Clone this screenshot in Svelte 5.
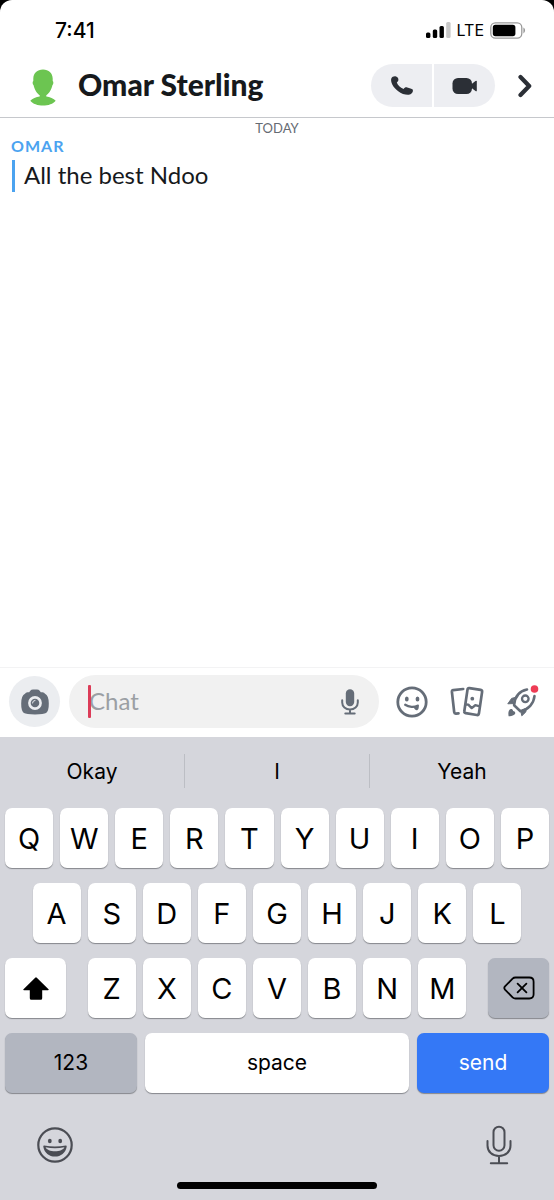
<script>
    const topRow = 'QWERTYUIOP'.split('');
    const middleRow = 'ASDFGHJKL'.split('');
    const bottomRow = 'ZXCVBNM'.split('');
    const suggestions = ['Okay', 'I', 'Yeah'];
    const messages = [{ sender: 'Omar', text: 'All the best Ndoo' }];

    let draft = $state('');
</script>

<div class="screen">
    <div class="phone">
        <div class="status">
            <span class="time">7:41</span>
            <div class="status-icons">
                <svg width="25" height="16" viewBox="0 0 25 16" aria-hidden="true">
                    <rect x="0" y="10.500" width="4.400" height="5.500" rx="1.500" />
                    <rect x="6.800" y="7.500" width="4.400" height="8.500" rx="1.500" />
                    <rect x="13.500" y="4" width="4.400" height="12" rx="1.500" />
                    <rect x="20.200" y="0" width="4.400" height="16" rx="1.500" fill="#c8c8c8" />
                </svg>
                <span class="network">LTE</span>
                <svg width="36" height="17" viewBox="0 0 36 17" aria-hidden="true">
                    <rect x="0.8" y="0.8" width="31" height="15.4" rx="4.6" fill="none" stroke="#999" stroke-width="1.3" />
                    <rect x="2.8" y="2.8" width="22.6" height="11.4" rx="2.6" />
                    <path d="M33.4 5.6c2.2 1 2.2 4.8 0 5.8z" fill="#999" />
                </svg>
            </div>
        </div>

        <header>
            <svg class="avatar" width="26" height="37" viewBox="0 0 26 37" aria-hidden="true">
                <path fill="#6cc551" d="M13 .5C18.800.5 22.500 4 22.700 9.500v2.500c1 .4.900 3.500-.3 4.300C21.600 20.500 19 24.500 16.300 26.200v1.300c3.500.4 7.500 1.900 9.400 4.200C23.500 34.800 18 36.600 13 36.600S2.500 34.800.3 31.700C2.200 29.400 6.200 27.900 9.700 27.500v-1.300C7 24.500 4.400 20.500 3.600 16.300 2.400 15.500 2.300 12.400 3.300 12V9.500C3.500 4 7.200.5 13 .5z" />
            </svg>
            <h1>Omar Sterling</h1>
            <div class="calls">
                <button aria-label="Voice call">
                    <svg width="24" height="22" viewBox="0 0 24 22" aria-hidden="true">
                        <path fill="#2b2f36" d="M1.300 3.400C2 1.800 4.200 1 6 1.500c1.600.5 2.400 1.600 2.400 3.100 0 1.300-.5 2.200-1.600 2.900 1 2.700 3.300 5 6.800 6.400.8-1.300 2-1.800 3.600-1.500 2.300.4 4.600 1.300 5.500 2.100.8 1.800-.6 4.300-3 5-2.800.8-7.700-.3-11.800-3.600C3.200 12.500.2 6.700 1.300 3.400z" />
                    </svg>
                </button>
                <button aria-label="Video call">
                    <svg width="26" height="18" viewBox="0 0 26 18" aria-hidden="true">
                        <rect x="0.500" y="1" width="19.500" height="16" rx="5.500" fill="#2b2f36" />
                        <path fill="#2b2f36" d="M19 7.500 23.500 4q1.300-.7 1.300.6v8.800q0 1.300-1.300.6L19 10.500z" />
                    </svg>
                </button>
            </div>
            <button class="next" aria-label="Open profile">
                <svg width="14" height="24" viewBox="0 0 14 24" aria-hidden="true">
                    <path d="m2.500 3 8.700 9-8.700 9" fill="none" stroke="#2b2f36" stroke-width="4.2" stroke-linecap="round" stroke-linejoin="round" />
                </svg>
            </button>
        </header>

        <main>
            <p class="day">TODAY</p>
            {#each messages as message}
                <article>
                    <h2>{message.sender}</h2>
                    <p class="message">{message.text}</p>
                </article>
            {/each}
        </main>

        <div class="composer">
            <button class="camera" aria-label="Camera">
                <svg width="28" height="26" viewBox="0 0 28 26" aria-hidden="true">
                    <path fill="#656d78" d="M9.300 1.800Q10.300.5 12 .5h4q1.700 0 2.700 1.300l1.100 1.500h1.700q1.800 0 2.500 1.500Q27.700 6.500 27.800 14.500 27.900 22 25 24q-2 1.400-11 1.400T3 24Q.1 22 .2 14.500.3 6.500 4 4.800q.7-1.500 2.500-1.500h1.700z" />
                    <circle cx="14" cy="14" r="5.600" fill="#656d78" stroke="#ebedf0" stroke-width="2.600" />
                    <path d="M11.500 14a2.600 2.600 0 0 1 2.500-2.600" fill="none" stroke="#ebedf0" stroke-width="1" stroke-linecap="round" />
                </svg>
            </button>
            <div class="field">
                <span class="caret"></span>
                <input type="text" placeholder="Chat" aria-label="Chat" bind:value={draft} />
                <button aria-label="Voice note">
                    <svg width="18" height="26" viewBox="0 0 18 26" aria-hidden="true">
                        <rect x="4.800" y="0.300" width="8.400" height="17" rx="4.200" fill="#656d78" />
                        <path d="M1.200 11.200v2.300C1.200 17.500 4.500 20.400 9 20.400s7.800-2.900 7.800-6.900v-2.300M9 20.400v4M4.300 24.500h9.400" fill="none" stroke="#656d78" stroke-width="2" stroke-linecap="round" />
                    </svg>
                </button>
            </div>
            <div class="tools">
                <button aria-label="Stickers">
                    <svg width="32" height="32" viewBox="0 0 32 32" aria-hidden="true">
                        <circle cx="16" cy="16" r="14.200" fill="none" stroke="#656d78" stroke-width="2.800" />
                        <ellipse cx="10.800" cy="13" rx="1.900" ry="2.600" fill="#656d78" />
                        <ellipse cx="21.500" cy="13" rx="1.900" ry="2.600" fill="#656d78" />
                        <path d="M9.200 18.800c3.500 2.500 9.300 2.800 12.400.8" fill="none" stroke="#656d78" stroke-width="2.300" stroke-linecap="round" />
                        <path d="M17.800 21.500l4.800-2.900c.4 2.300.3 5.100-1.400 5.600-1.400.3-2.500-.7-3.400-2.700z" fill="#656d78" />
                    </svg>
                </button>
                <button aria-label="Memories">
                    <svg width="34" height="32" viewBox="0 0 34 32" aria-hidden="true" fill="none" stroke="#656d78" stroke-width="2.700" stroke-linecap="round" stroke-linejoin="round">
                        <path d="M13.200 3 3.300 4.200q-1.500.2-1.400 1.700l2.300 20.300q.2 1.500 1.700 1.400l2.600-.3" />
                        <path d="m19.400 2.100 11.300 1.800q1.700.3 1.400 2l-3.200 21.700q-.3 1.700-2 1.400l-11.200-1.800q-1.700-.3-1.400-2l3.200-21.600q.2-1.700 1.900-1.500z" />
                        <path d="m16 18.500 2.300.1 3.400 3.500 3.600-2.900 3.600.9" stroke-width="2.400" />
                        <circle cx="22.300" cy="12.700" r="1.900" fill="#656d78" stroke="none" />
                    </svg>
                </button>
                <button aria-label="Games">
                    <svg width="34" height="34" viewBox="0 0 34 34" aria-hidden="true" fill="none" stroke="#656d78" stroke-width="2.600" stroke-linecap="round" stroke-linejoin="round">
                        <path d="M21 4.500C14.500 5.700 9 10.500 8.100 20.200l6.300 6C22.500 24.500 27.800 18.500 28.500 11" />
                        <path d="M8.700 12.600 5.600 13.400 1.800 18.800l5-.2zM20.200 23.500 19.800 27l-4 3.800-1-4.600z" fill="#656d78" stroke-width="1" />
                        <circle cx="19.300" cy="13.800" r="3.300" stroke-width="2.300" />
                        <path d="M3.200 25.300c1-1.900 3.500-1.600 3.900.6 2.300.2 3 2.600 1.100 3.900-1.700 1.200-4.200 1.500-5.600 1.500-.3-1.500-.5-4.400.6-6z" fill="#656d78" stroke="none" />
                        <circle cx="28.500" cy="4" r="3.800" fill="#ee3c55" stroke="none" />
                    </svg>
                </button>
            </div>
        </div>

        <section class="keyboard" aria-label="Keyboard">
            <div class="suggestions">
                {#each suggestions as word}
                    <button>{word}</button>
                {/each}
            </div>

            <div class="rows">
                <div class="row">
                    {#each topRow as letter}
                        <button class="key">{letter}</button>
                    {/each}
                </div>
                <div class="row">
                    {#each middleRow as letter}
                        <button class="key">{letter}</button>
                    {/each}
                </div>
                <div class="row spread">
                    <button class="key side" aria-label="Shift">
                        <svg width="26" height="23" viewBox="0 0 26 23" aria-hidden="true">
                            <path d="M12.200.7q.8-.8 1.600 0L25.500 12.200q.7 1-.5 1h-5.800v8q0 1.500-1.500 1.500H8.300q-1.500 0-1.500-1.500v-8H1q-1.200 0-.5-1z" />
                        </svg>
                    </button>
                    {#each bottomRow as letter}
                        <button class="key">{letter}</button>
                    {/each}
                    <button class="key side grey" aria-label="Delete">
                        <svg width="32" height="24" viewBox="0 0 32 24" aria-hidden="true" fill="none" stroke="#000" stroke-width="1.800" stroke-linecap="round" stroke-linejoin="round">
                            <path d="M12.500 1.500h13.800q4.300 0 4.300 4.200v12.600q0 4.200-4.300 4.200H12.500q-1.700 0-2.900-1.200L2 13.600q-1.400-1.600 0-3.200l7.600-7.700q1.200-1.200 2.900-1.200z" />
                            <path d="m14.600 7.600 8.800 8.800m0-8.800-8.800 8.800" />
                        </svg>
                    </button>
                </div>
                <div class="row actions">
                    <button class="key grey">123</button>
                    <button class="key space">space</button>
                    <button class="key send">send</button>
                </div>
            </div>

            <div class="extras">
                <button aria-label="Emoji">
                    <svg width="38" height="38" viewBox="0 0 38 38" aria-hidden="true">
                        <circle cx="19" cy="19" r="16.700" fill="none" stroke="#4b4d54" stroke-width="2.200" />
                        <ellipse cx="13.800" cy="15" rx="1.900" ry="2.300" fill="#4b4d54" />
                        <ellipse cx="24.200" cy="15" rx="1.900" ry="2.300" fill="#4b4d54" />
                        <path fill="#4b4d54" fill-rule="evenodd" d="M8.200 19.500q10.800 2.200 21.600 0 1.200 0 .9 1.300C29.500 27 25 30.600 19 30.600S8.500 27 7.300 20.800q-.3-1.300.9-1.300zM9.600 21.300c1 2.500 4.800 4 9.400 4s8.400-1.500 9.400-4Q19 23.100 9.600 21.300z" />
                    </svg>
                </button>
                <button aria-label="Dictate">
                    <svg width="26" height="40" viewBox="0 0 26 40" aria-hidden="true" fill="none" stroke="#4b4d54" stroke-width="2" stroke-linecap="round">
                        <rect x="7.500" y="1.700" width="11" height="24" rx="5.500" />
                        <path d="M1.500 16v4.500C1.500 26.800 6.200 31 13 31s11.500-4.200 11.500-10.500V16M13 31v7M4.800 38.200h16.400" />
                    </svg>
                </button>
            </div>
            <div class="home"></div>
        </section>
    </div>
</div>

<style>
    :global(body) {
        background: #000;
    }

    .screen {
        background: #000;
    }

    .phone {
        display: flex;
        flex-direction: column;
        min-height: 100vh;
        background: #fff;
        border-radius: 12px 12px 0 0;
        overflow: hidden;
        color: #16191c;
        font-family: Lato, "Open Sans", sans-serif;
    }

    button {
        display: flex;
        align-items: center;
        justify-content: center;
        padding: 0;
        border: 0;
        background: none;
        color: inherit;
        font: inherit;
    }

    svg {
        display: block;
        flex-shrink: 0;
    }

    h1,
    h2,
    p {
        margin: 0;
    }

    .status {
        display: flex;
        align-items: center;
        justify-content: space-between;
        height: 32px;
        padding: 14px 28px 8px 55px;
        color: #000;
        font-family: Inter, sans-serif;
    }

    .time {
        font-size: 21px;
        font-weight: 500;
    }

    .status-icons {
        display: flex;
        align-items: center;
        gap: 6px;
    }

    .network {
        font-size: 16px;
        font-weight: 400;
    }

    header {
        display: flex;
        align-items: center;
        height: 63px;
        padding: 0 22px 0 30px;
        border-bottom: 1px solid #c6c8cc;
    }

    .avatar {
        margin-top: 4px;
    }

    h1 {
        flex: 1;
        margin-left: 22px;
        padding-bottom: 4px;
        font-size: 30px;
        font-weight: 900;
        line-height: 36px;
    }

    .calls {
        display: flex;
        gap: 2px;
    }

    .calls button {
        width: 61px;
        height: 43px;
        background: #edeef2;
    }

    .calls button:first-child {
        border-radius: 22px 0 0 22px;
    }

    .calls button:last-child {
        border-radius: 0 22px 22px 0;
    }

    .next {
        margin-left: 23px;
    }

    main {
        flex: 1;
        padding: 2px 11px;
    }

    .day {
        color: #656b73;
        font-size: 13px;
        line-height: 16px;
        text-align: center;
    }

    h2 {
        color: #4ba3f0;
        font-size: 16px;
        font-weight: 700;
        letter-spacing: 1px;
        line-height: 20px;
        text-transform: uppercase;
    }

    .message {
        margin: 4px 0 0 1px;
        padding: 0 0 2px 9px;
        border-left: 3px solid #4ba3f0;
        font-size: 24px;
        line-height: 30px;
    }

    .composer {
        display: flex;
        align-items: center;
        gap: 9px;
        height: 67px;
        padding: 0 14px 2px 9px;
        border-top: 1px solid #f3f3f4;
    }

    .camera {
        width: 51px;
        height: 51px;
        border-radius: 50%;
        background: #ebedf0;
    }

    .field {
        position: relative;
        display: flex;
        flex: 1;
        align-items: center;
        min-width: 0;
        height: 53px;
        padding: 0 20px;
        border-radius: 27px;
        background: #f1f1f1;
        box-sizing: border-box;
    }

    .tools {
        display: flex;
        align-items: center;
        gap: 22px;
        margin-left: 8px;
    }

    .caret {
        position: absolute;
        top: 10px;
        left: 19px;
        width: 3px;
        height: 33px;
        border-radius: 1px;
        background: #dc3c58;
    }

    input {
        flex: 1;
        min-width: 0;
        padding: 0 0 2px;
        border: 0;
        outline: 0;
        background: none;
        color: #16191c;
        font: inherit;
        font-size: 24px;
        line-height: 32px;
    }

    input::placeholder {
        color: #9b9fa4;
        opacity: 1;
    }

    .keyboard {
        background: #d5d6dc;
        color: #000;
        font-family: Inter, sans-serif;
    }

    .suggestions {
        display: flex;
        padding: 17px 0 20px;
    }

    .suggestions button {
        flex: 1;
        height: 34px;
        font-size: 21px;
    }

    .suggestions button + button {
        border-left: 1px solid #bcbec4;
    }

    .rows {
        display: flex;
        flex-direction: column;
        gap: 15px;
        padding: 0 5px;
    }

    .row {
        display: flex;
        justify-content: center;
        gap: 7px;
    }

    .key {
        width: calc((100% - 63px) / 10);
        height: 60px;
        border-radius: 7px;
        background: #fff;
        box-shadow: 0 1px 1px #85878c;
        font-size: 29px;
    }

    .key.side {
        width: 61px;
    }

    .spread .side:first-child {
        margin-right: auto;
    }

    .spread .side:last-child {
        margin-left: auto;
    }

    .key.grey {
        background: #b2b6c0;
    }

    .actions {
        gap: 8px;
    }

    .actions .key {
        flex: 1;
        width: auto;
        padding-bottom: 2px;
        font-size: 21px;
    }

    .actions .space {
        flex: 2;
    }

    .actions .send {
        background: #3478f6;
        color: #fff;
    }

    .extras {
        display: flex;
        align-items: center;
        justify-content: space-between;
        padding: 32px 42px 0 36px;
    }

    .home {
        width: 36%;
        height: 7px;
        margin: 17px auto 11px;
        border-radius: 4px;
        background: #000;
    }
</style>
